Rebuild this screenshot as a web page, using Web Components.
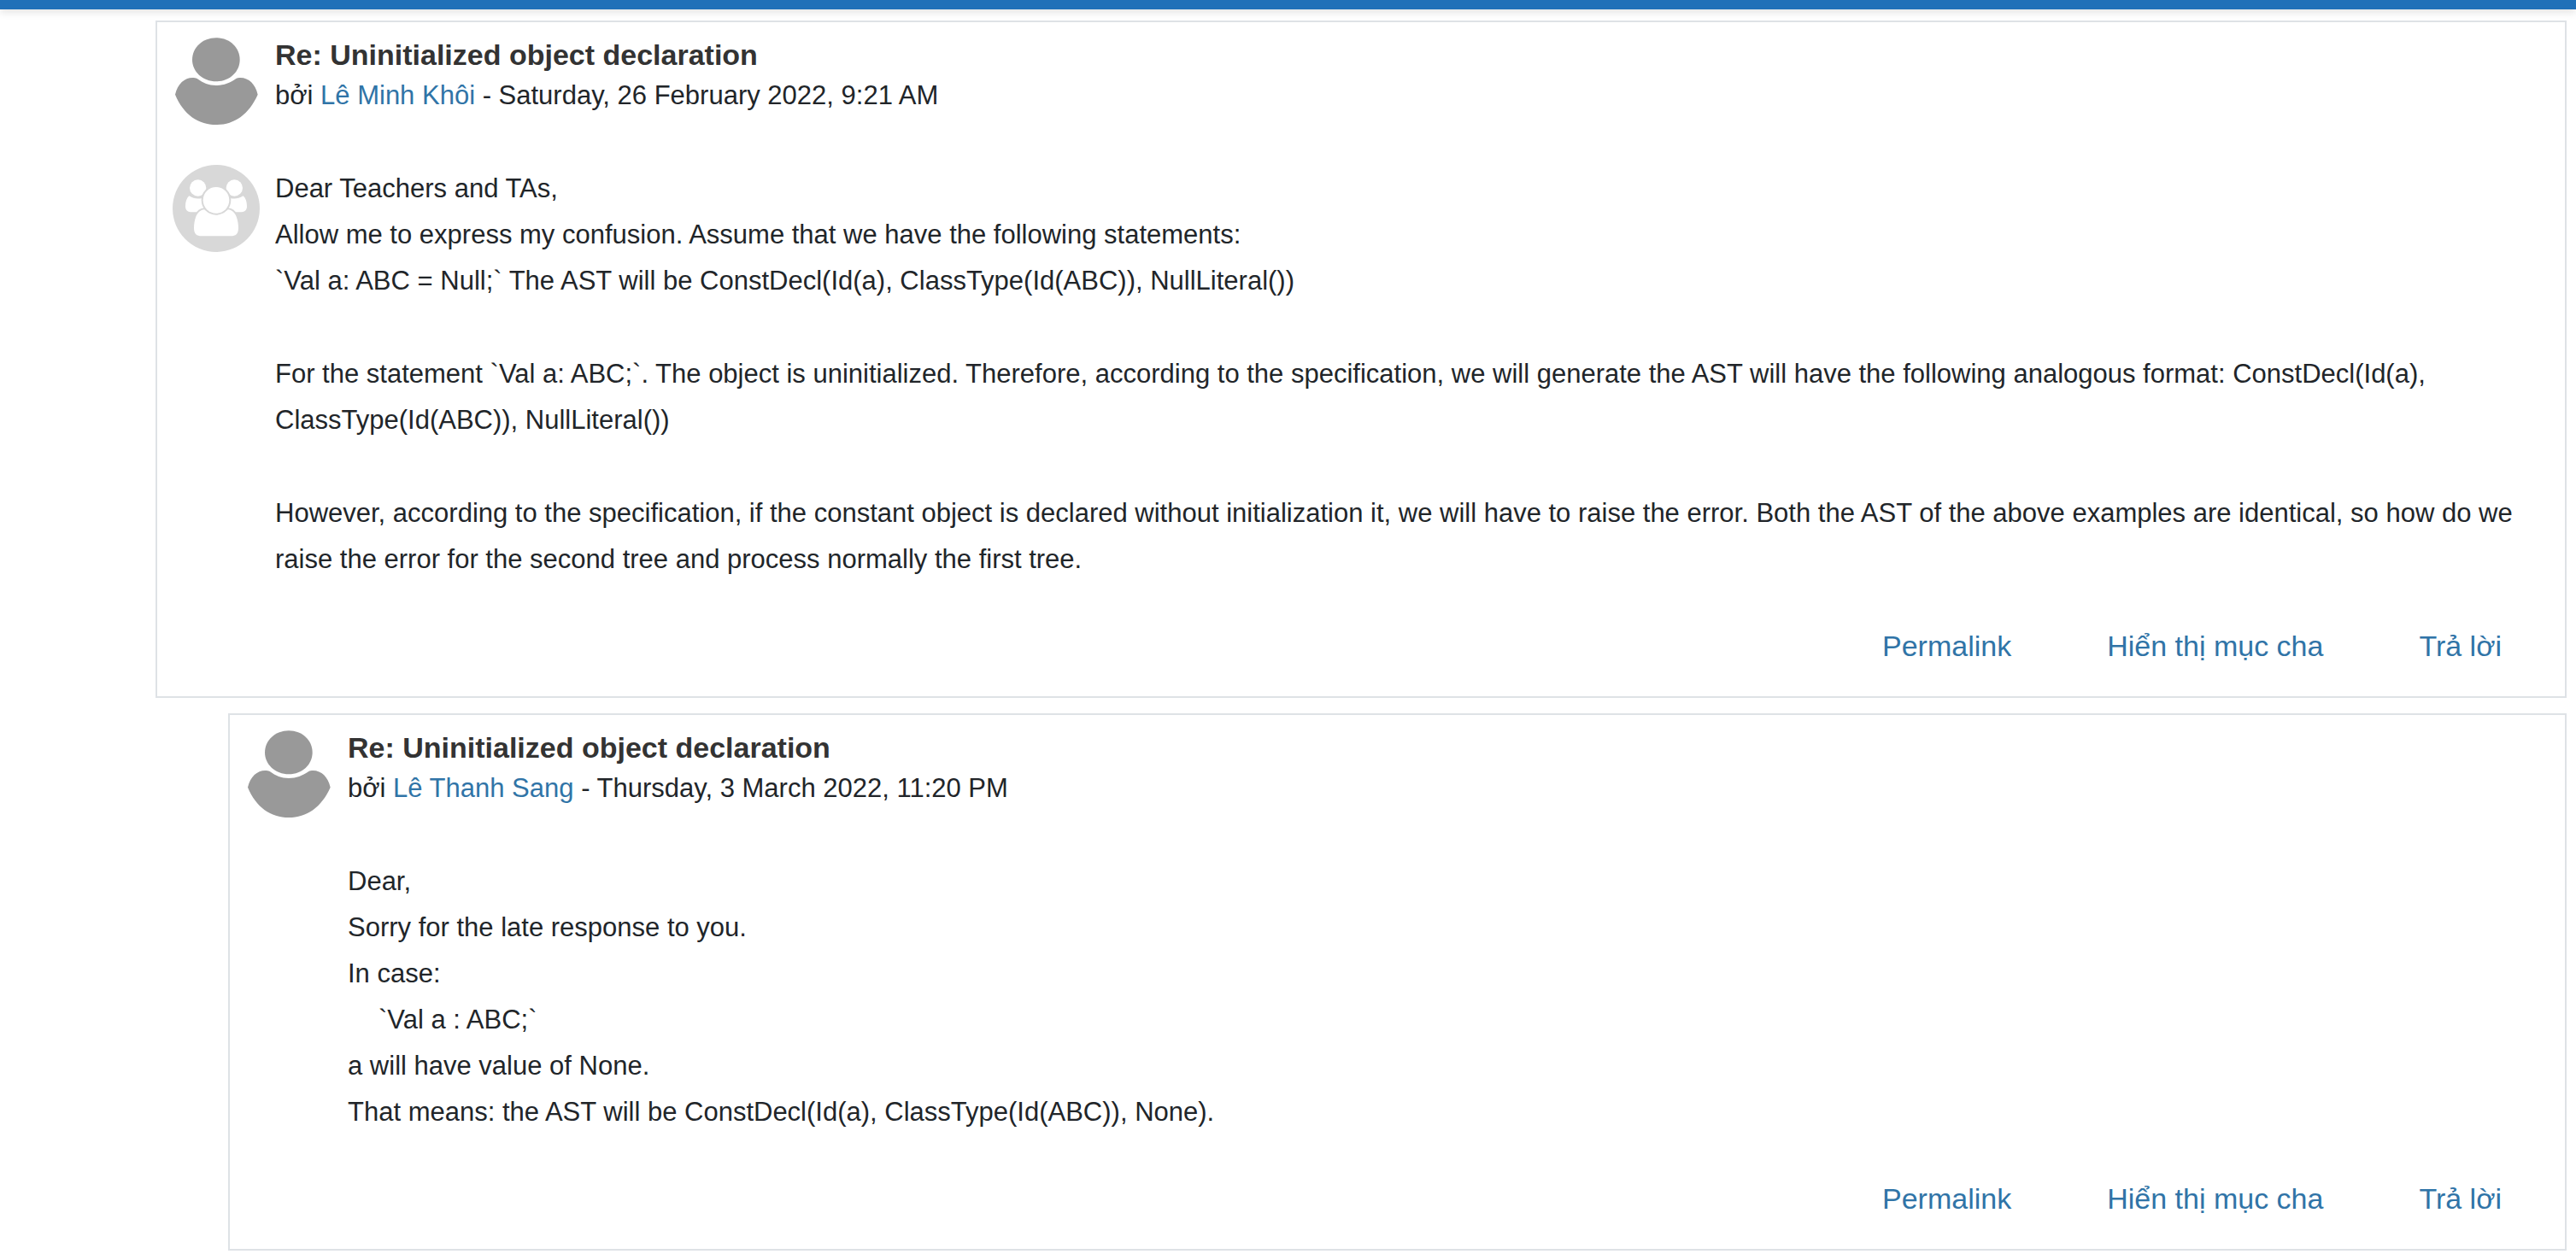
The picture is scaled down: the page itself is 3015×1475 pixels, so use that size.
<!DOCTYPE html>
<html lang="vi">
<head>
<meta charset="utf-8">
<title>Uninitialized object declaration</title>
<style>
  body { margin: 0; background: #fff; color: #212529; font: 31px/54px "Liberation Sans", Arial, sans-serif; }
  p { margin: 0 0 55px; }
  p:last-child { margin-bottom: 0; }
  .code { padding-left: 36px; }
</style>
</head>
<body>
<forum-page>
  <forum-post author="Lê Minh Khôi" date="Saturday, 26 February 2022, 9:21 AM" group>
    <p>Dear Teachers and TAs,<br>Allow me to express my confusion. Assume that we have the following statements:<br>`Val a: ABC = Null;` The AST will be ConstDecl(Id(a), ClassType(Id(ABC)), NullLiteral())</p>
    <p>For the statement `Val a: ABC;`. The object is uninitialized. Therefore, according to the specification, we will generate the AST will have the following analogous format: ConstDecl(Id(a), ClassType(Id(ABC)), NullLiteral())</p>
    <p>However, according to the specification, if the constant object is declared without initialization it, we will have to raise the error. Both the AST of the above examples are identical, so how do we raise the error for the second tree and process normally the first tree.</p>
  </forum-post>
  <forum-post class="reply" author="Lê Thanh Sang" date="Thursday, 3 March 2022, 11:20 PM">
    <p>Dear,<br>Sorry for the late response to you.<br>In case:<br><span class="code">`Val a : ABC;`</span><br>a will have value of None.<br>That means: the AST will be ConstDecl(Id(a), ClassType(Id(ABC)), None).</p>
  </forum-post>
</forum-page>

<template id="page-template">
  <style>
    :host { display: block; }
    .bar { height: 11px; background: #2070b8; box-shadow: 0 4px 8px rgba(0, 0, 0, .1); }
    main { display: flex; flex-direction: column; gap: 18px; padding: 13px 11px 9px 182px; }
    ::slotted(.reply) { margin-left: 85px; }
  </style>
  <header class="bar"></header>
  <main><slot></slot></main>
</template>

<template id="post-template">
  <style>
    :host { display: block; border: 2px solid #dee2e6; }
    article { display: grid; grid-template-columns: 102px 1fr; column-gap: 18px; padding: 18px 18px 35px; }
    header { min-height: 102px; margin-bottom: 47px; }
    h3 { margin: 0 0 4px; font-size: 34px; line-height: 40px; color: #333; }
    .by { line-height: 48px; }
    a { color: #3074a7; text-decoration: none; }
    a:hover { text-decoration: underline; }
    .content { padding-top: 1px; }
    nav { grid-column: 2; display: flex; justify-content: flex-end; gap: 112px; margin-top: 50px; padding-right: 56px; font-size: 34px; line-height: 48px; }
  </style>
  <article>
    <user-avatar></user-avatar>
    <header>
      <h3>Re: Uninitialized object declaration</h3>
      <div class="by">bởi <a href="#author" id="author"></a> - <time></time></div>
    </header>
    <div class="group"></div>
    <div class="content"><slot></slot></div>
    <nav>
      <a href="#permalink">Permalink</a>
      <a href="#parent">Hiển thị mục cha</a>
      <a href="#reply">Trả lời</a>
    </nav>
  </article>
</template>

<template id="user-template">
  <style>
    :host, svg { display: block; width: 102px; height: 102px; }
  </style>
  <svg viewBox="0 0 306 306" fill="#999" aria-hidden="true">
    <path d="M153 1C200 1 236 35 236 78C236 120 200 154 153 154C106 154 69 120 69 78C69 35 106 1 153 1Z"/>
    <path d="M9 200C18 162 42 141 70 141C76 141 81 141 86 144C108 160 126 168 153 168C180 168 200 160 222 145C228 141 232 141 238 141C268 141 291 164 299 200C268 270 216 306 153 306C90 306 38 270 9 200Z"/>
  </svg>
</template>

<template id="group-template">
  <style>
    :host, svg { display: block; width: 102px; height: 102px; }
  </style>
  <svg viewBox="0 0 306 306" aria-hidden="true">
    <circle cx="153" cy="153" r="153" fill="#d8d8d8"/>
    <g fill="#fff">
      <circle cx="89" cy="81" r="29"/>
      <circle cx="217" cy="81" r="29"/>
      <path d="M58 109C78 121 96 121 112 113V166H70C53 166 45 159 45 146C45 130 49 117 58 109Z"/>
      <path d="M248 109C228 121 210 121 194 113V166H236C253 166 261 159 261 146C261 130 257 117 248 109Z"/>
    </g>
    <path d="M112 157C137 179 169 179 194 157C220 159 231 190 231 222C231 242 222 250 204 250H102C84 250 75 242 75 222C75 190 86 159 112 157Z" fill="#fff" stroke="#d8d8d8" stroke-width="12" paint-order="stroke"/>
    <circle cx="153" cy="124" r="46" fill="#fff" stroke="#d8d8d8" stroke-width="12" paint-order="stroke"/>
  </svg>
</template>

<script>
  const attach = (host, id) => {
    const root = host.attachShadow({ mode: "open" });
    root.append(document.getElementById(id).content.cloneNode(true));
    return root;
  };

  customElements.define("user-avatar", class extends HTMLElement {
    constructor() { super(); attach(this, "user-template"); }
  });

  customElements.define("group-picture", class extends HTMLElement {
    constructor() { super(); attach(this, "group-template"); }
  });

  customElements.define("forum-post", class extends HTMLElement {
    connectedCallback() {
      if (this.shadowRoot) return;
      const root = attach(this, "post-template");
      root.querySelector("#author").textContent = this.getAttribute("author");
      root.querySelector("time").textContent = this.getAttribute("date");
      if (this.hasAttribute("group")) {
        root.querySelector(".group").append(document.createElement("group-picture"));
      }
    }
  });

  customElements.define("forum-page", class extends HTMLElement {
    constructor() { super(); attach(this, "page-template"); }
  });
</script>
</body>
</html>
